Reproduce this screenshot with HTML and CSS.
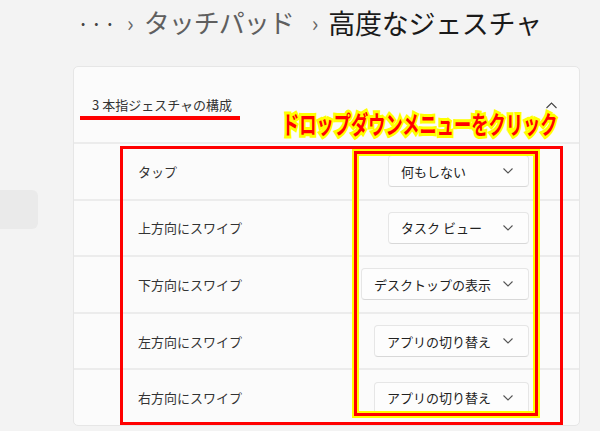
FILE: index.html
```html
<!DOCTYPE html>
<html lang="ja">
<head>
    <meta charset="UTF-8">
    <title>高度なジェスチャ</title>
    <link rel="stylesheet" href="styles.css">
</head>
<body>
    <div class="layout">
        <div class="sidebar">
            <div class="nav-item"></div>
        </div>

        <div class="main">
            <div class="breadcrumb">
                <span class="crumb-more">···</span>
                <span class="crumb-sep">›</span>
                <span class="crumb-parent">タッチパッド</span>
                <span class="crumb-sep">›</span>
                <span class="crumb-current">高度なジェスチャ</span>
            </div>

            <div class="card">
                <div class="card-header">
                    <span class="card-title">3 本指ジェスチャの構成</span>
                    <svg class="chevron-up" width="11" height="7" viewBox="0 0 11 7"><polyline points="0.5,6 5.5,1 10.5,6" fill="none" stroke="#444" stroke-width="1.1"/></svg>
                </div>

                <div class="row">
                    <span class="row-label">タップ</span>
                    <div class="dropdown"><span>何もしない</span><svg width="10" height="6" viewBox="0 0 10 6"><polyline points="0.5,0.5 5,5 9.5,0.5" fill="none" stroke="#555" stroke-width="1.1"/></svg></div>
                </div>
                <div class="row">
                    <span class="row-label">上方向にスワイプ</span>
                    <div class="dropdown"><span>タスク ビュー</span><svg width="10" height="6" viewBox="0 0 10 6"><polyline points="0.5,0.5 5,5 9.5,0.5" fill="none" stroke="#555" stroke-width="1.1"/></svg></div>
                </div>
                <div class="row">
                    <span class="row-label">下方向にスワイプ</span>
                    <div class="dropdown"><span>デスクトップの表示</span><svg width="10" height="6" viewBox="0 0 10 6"><polyline points="0.5,0.5 5,5 9.5,0.5" fill="none" stroke="#555" stroke-width="1.1"/></svg></div>
                </div>
                <div class="row">
                    <span class="row-label">左方向にスワイプ</span>
                    <div class="dropdown"><span>アプリの切り替え</span><svg width="10" height="6" viewBox="0 0 10 6"><polyline points="0.5,0.5 5,5 9.5,0.5" fill="none" stroke="#555" stroke-width="1.1"/></svg></div>
                </div>
                <div class="row">
                    <span class="row-label">右方向にスワイプ</span>
                    <div class="dropdown"><span>アプリの切り替え</span><svg width="10" height="6" viewBox="0 0 10 6"><polyline points="0.5,0.5 5,5 9.5,0.5" fill="none" stroke="#555" stroke-width="1.1"/></svg></div>
                </div>
            </div>
        </div>
    </div>

    <!-- 注釈 -->
    <div class="mark-underline"></div>
    <div class="mark-label">ドロップダウンメニューをクリック</div>
    <div class="mark-rows"></div>
    <div class="mark-dropdowns"></div>
</body>
</html>
```

FILE: styles.css
```css
* {
    margin: 0;
    padding: 0;
    box-sizing: border-box;
}

body {
    font-family: "Noto Sans CJK JP", "Noto Sans", sans-serif;
    background: #f3f3f3;
    color: #1b1b1b;
    overflow: hidden;
    width: 600px;
    height: 431px;
}

.layout {
    display: flex;
}

.sidebar {
    width: 73px;
    padding-top: 190px;
}

.nav-item {
    width: 38px;
    height: 39px;
    background: #eaeaea;
    border-radius: 0 6px 6px 0;
}

.main {
    width: 507px;
}

.breadcrumb {
    height: 66px;
    display: flex;
    align-items: center;
    padding: 0 0 22px 4px;
    font-size: 26px;
    line-height: 1;
}

.crumb-more {
    color: #444;
    font-size: 22px;
    letter-spacing: 1px;
    width: 26px;
}

.crumb-sep {
    color: #666;
    font-size: 22px;
    margin: 0 10px 0 24px;
}

.crumb-parent {
    color: #5f5f5f;
    letter-spacing: -1px;
    margin-right: -6px;
}

.crumb-current {
    color: #1a1a1a;
    font-size: 27px;
    letter-spacing: -0.3px;
}

.card {
    background: #fbfbfb;
    border: 1px solid #e6e6e6;
    border-radius: 5px;
    overflow: hidden;
}

.card-header {
    height: 75px;
    display: flex;
    align-items: center;
    justify-content: space-between;
    padding: 0 22px 0 18px;
    font-size: 13px;
    color: #333;
}

.card-title {
    margin-top: 0;
}

.chevron-up {
    margin-top: 2px;
}

.row {
    height: 56.6px;
    border-top: 2px solid #ececec;
    display: flex;
    align-items: center;
    justify-content: space-between;
    padding: 0 50px 0 64px;
    font-size: 13px;
    color: #333;
}

.dropdown {
    min-width: 141px;
    height: 32px;
    display: flex;
    align-items: center;
    justify-content: space-between;
    gap: 12px;
    padding: 0 15px 0 12px;
    background: #fdfdfd;
    border: 1px solid #e6e6e6;
    border-bottom-color: #d8d8d8;
    border-radius: 4px;
    font-size: 13px;
    color: #222;
}

/* 注釈 */
.mark-underline {
    position: absolute;
    left: 80px;
    top: 116px;
    width: 160px;
    height: 4px;
    background: #ff0000;
}

.mark-label {
    position: absolute;
    left: 282px;
    top: 108px;
    font-size: 25px;
    font-weight: 700;
    color: #ff0000;
    white-space: nowrap;
    transform: scaleX(0.69);
    transform-origin: left center;
    -webkit-text-stroke: 6px #ffff00;
    paint-order: stroke fill;
    line-height: 1.2;
}

.mark-rows {
    position: absolute;
    left: 120px;
    top: 146px;
    width: 443px;
    height: 279px;
    border: 3px solid #ff0000;
}

.mark-dropdowns {
    position: absolute;
    left: 354px;
    top: 151px;
    width: 184px;
    height: 265px;
    border: 3px solid #ff0000;
    outline: 2px solid #ffff00;
    box-shadow: inset 0 0 0 2px #ffff00;
}
```
